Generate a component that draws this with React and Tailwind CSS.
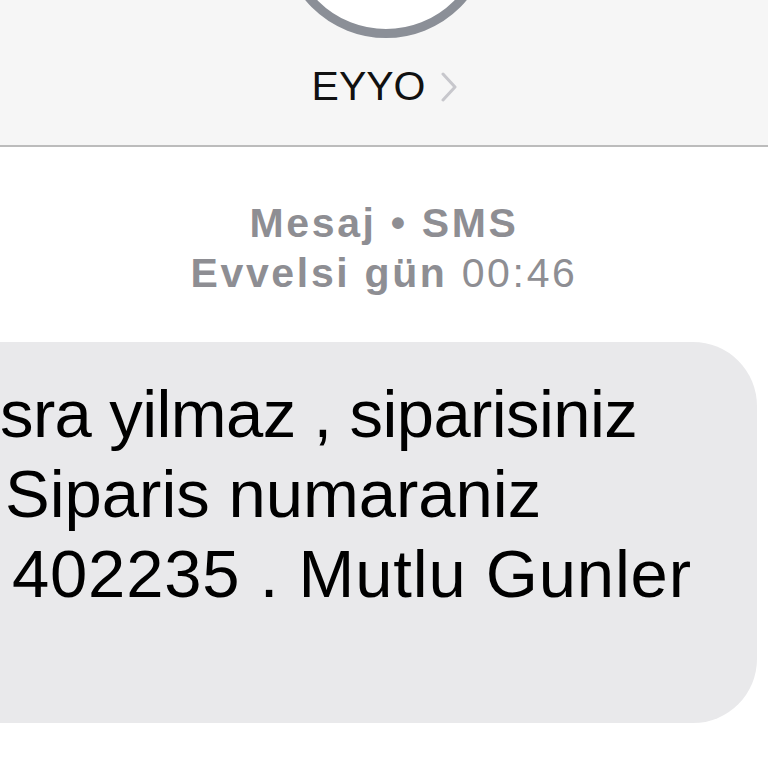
import React from 'react';

const App = () => {
  return (
    <div className="w-[768px] h-[768px] overflow-hidden bg-white font-['Liberation_Sans',Arial,sans-serif]">
      {/* üst başlık */}
      <div className="bg-[#f6f6f6] border-b-2 border-[#bcbcbc] overflow-hidden flex flex-col items-center pb-[34px]">
        <div className="w-[210px] h-[210px] mt-[-172px] ml-[4px] rounded-full border-[9px] border-[#8b8f97] bg-white"></div>
        <div className="mt-[23px] flex items-center h-[50px] ml-[2px]">
          <span className="text-[41px] leading-[50px] text-[#111111]">EYYO</span>
          <svg width="18" height="30" viewBox="0 0 18 30" className="ml-[15px] mt-[2px]">
            <path d="M3 2 L15 15 L3 28" fill="none" stroke="#c7c7cc" strokeWidth="3" strokeLinecap="round" strokeLinejoin="round" />
          </svg>
        </div>
      </div>

      {/* tarih */}
      <div className="mt-[51px] flex flex-col items-center text-[#8e8e93] text-[41px] leading-[50px] tracking-[0.065em]">
        <div className="font-semibold">Mesaj • SMS</div>
        <div>
          <span className="font-semibold">Evvelsi gün</span> 00:46
        </div>
      </div>

      {/* mesaj balonu */}
      <div className="mt-[44px] w-[757px] bg-[#e9e9eb] rounded-r-[64px] pt-[32px] pb-[109px] text-[67px] leading-[80px] text-black whitespace-nowrap">
        <div className="ml-[0px] tracking-[-0.6px]">sra yilmaz , siparisiniz</div>
        <div className="ml-[5px]">Siparis numaraniz</div>
        <div className="ml-[12px] tracking-[0.8px]">402235 . Mutlu Gunler</div>
      </div>
    </div>
  );
};

export default App;
